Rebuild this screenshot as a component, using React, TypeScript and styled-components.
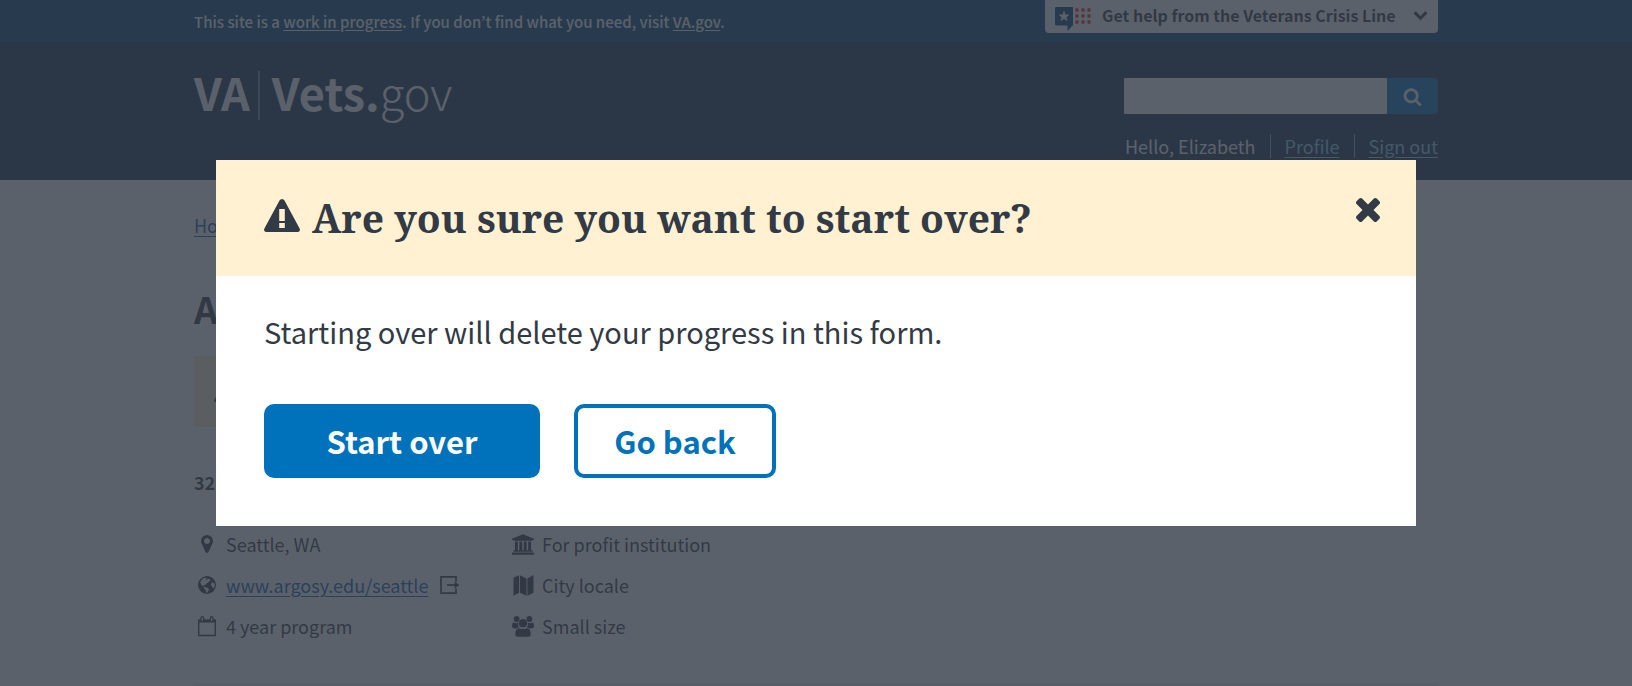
import React from "react";
import styled, { createGlobalStyle } from "styled-components";

const sans = '"Noto Sans CJK JP", "Noto Sans", sans-serif';
const serif = '"Noto Serif", "DejaVu Serif", serif';
const ink = "#323a45";
const blue = "#0071bb";
const cream = "#fff1d2";

const GlobalStyle = createGlobalStyle`
  *, *::before, *::after { box-sizing: border-box; }
  body {
    margin: 0;
    background: #fff;
    color: ${ink};
    font-family: ${sans};
    font-size: 18px;
    line-height: 24px;
    overflow: hidden;
  }
  h1, h2, p, ul { margin: 0; padding: 0; }
  ul { list-style: none; }
  button, input { font-family: inherit; }
  svg { display: block; flex: none; }
`;

const Container = styled.div`
  max-width: 1244px;
  margin: 0 auto;
`;

/* Top banner */

const Banner = styled.div`
  background: #003e73;
  color: #fff;
`;

const BannerRow = styled(Container)`
  display: flex;
  justify-content: space-between;
  align-items: flex-start;
  height: 43px;
`;

const BannerText = styled.p`
  font-size: 15px;
  font-weight: 500;
  line-height: 44px;
`;

const BannerLink = styled.a`
  color: inherit;
  text-underline-offset: 2px;
`;

const CrisisButton = styled.button`
  display: flex;
  align-items: center;
  width: 393px;
  height: 33px;
  padding: 0 10px 4px 10px;
  border: 0;
  border-radius: 0 0 4px 4px;
  background: #fff;
  color: ${ink};
  font-size: 16px;
  font-weight: 700;
  line-height: 24px;
  white-space: nowrap;
`;

const CrisisLabel = styled.span`
  flex: 1;
  padding-left: 10px;
  text-align: left;
`;

/* Site header */

const Header = styled.header`
  background: #112e51;
  color: #fff;
`;

const HeaderRow = styled(Container)`
  display: flex;
  justify-content: space-between;
  align-items: flex-start;
  height: 137px;
`;

const Logo = styled.a`
  display: flex;
  align-items: flex-start;
  margin-top: 28px;
  color: inherit;
  font-size: 45px;
  font-weight: 700;
  line-height: 41px;
  text-decoration: none;
`;

const LogoAgency = styled.span`
  padding-right: 8px;
`;

const LogoSite = styled.span`
  padding: 0 0 8px 12px;
  border-left: 2px solid #6f7f93;
`;

const LogoSuffix = styled.span`
  font-weight: 300;
`;

const HeaderTools = styled.div`
  display: flex;
  flex-direction: column;
  align-items: flex-end;
  gap: 20px;
  padding-top: 35px;
`;

const SearchForm = styled.form`
  display: flex;
  width: 314px;
  height: 36px;
`;

const SearchInput = styled.input`
  flex: 1;
  min-width: 0;
  border: 0;
  padding: 0 10px;
  background: #fff;
  font-size: 18px;
`;

const SearchButton = styled.button`
  display: flex;
  align-items: center;
  justify-content: center;
  width: 51px;
  padding: 0;
  border: 0;
  border-radius: 0 4px 4px 0;
  background: ${blue};
  color: #fff;
`;

const UserNav = styled.nav`
  display: flex;
  white-space: nowrap;
`;

const UserItem = styled.span`
  padding: 0 14px;
  & + & { border-left: 1px solid #9aa6b5; }
  &:last-child { padding-right: 0; }
`;

const UserLink = styled.a`
  color: #8ad0f0;
  text-underline-offset: 3px;
`;

/* Page content */

const Main = styled.main`
  padding-top: 33px;
`;

const TextLink = styled.a`
  color: #0b5ab5;
  text-underline-offset: 3px;
`;

const SchoolName = styled.h1`
  margin-top: 49px;
  font-size: 37px;
  font-weight: 700;
  line-height: 44px;
`;

const AlertBar = styled.div`
  display: flex;
  align-items: center;
  width: 66%;
  height: 71px;
  margin-top: 26px;
  padding-left: 20px;
  background: ${cream};
`;

const StudentCount = styled.p`
  margin-top: 43px;
  font-weight: 700;
`;

const Facts = styled.div`
  display: grid;
  grid-template-columns: 316px 1fr;
  margin-top: 38px;
`;

const FactList = styled.ul`
  display: flex;
  flex-direction: column;
  gap: 17px;
`;

const Fact = styled.li`
  display: flex;
  align-items: center;
  gap: 6px;
`;

const FactIcon = styled.span`
  display: flex;
  justify-content: center;
  width: 26px;
`;

const ExternalIcon = styled.span`
  padding-left: 6px;
`;

const Rule = styled.hr`
  height: 3px;
  margin: 45px 0 0;
  border: 0;
  background: #eeeef0;
`;

/* Modal */

const Overlay = styled.div`
  position: fixed;
  inset: 0;
  padding: 160px 24px 24px;
  background: rgba(50, 58, 69, 0.8);
`;

const Dialog = styled.div`
  max-width: 1200px;
  margin: 0 auto;
  background: #fff;
`;

const DialogHeader = styled.div`
  display: flex;
  align-items: flex-start;
  padding: 36px 34px 36px 48px;
  background: ${cream};
`;

const DialogTitle = styled.h2`
  flex: 1;
  padding-left: 12px;
  font-family: ${serif};
  font-size: 39px;
  font-weight: 700;
  line-height: 44px;
`;

const CloseButton = styled.button`
  padding: 2px;
  border: 0;
  background: none;
  color: ${ink};
`;

const DialogBody = styled.div`
  padding: 35px 48px 48px;
`;

const DialogText = styled.p`
  font-size: 29px;
  line-height: 40px;
`;

const Actions = styled.div`
  display: flex;
  gap: 34px;
  margin-top: 53px;
`;

const ActionButton = styled.button<{ $primary?: boolean }>`
  height: 74px;
  width: ${(p) => (p.$primary ? 276 : 202)}px;
  padding: 0;
  border: 4px solid ${blue};
  border-radius: 10px;
  background: ${(p) => (p.$primary ? blue : "#fff")};
  color: ${(p) => (p.$primary ? "#fff" : blue)};
  font-size: 31px;
  font-weight: 700;
  line-height: 40px;
`;

/* Icons */

const WarningIcon = ({ size }: { size: number }) => (
  <svg width={size} height={size} viewBox="0 0 36 36" fill="currentColor" aria-hidden="true">
    <path
      fillRule="evenodd"
      d="M18 3q1.600 0 2.500 1.500l15.100 28q.7 1.300 0 2.400t-2.100 1.100h-31q-1.400 0-2.100-1.100t0-2.400l15.100-28q.9-1.500 2.500-1.500zM15.200 13v12h5.600v-12zM15.200 27v5h5.600v-5z"
    />
  </svg>
);

const CloseIcon = () => (
  <svg width="24" height="24" viewBox="302 366 1188 1188" fill="currentColor" aria-hidden="true">
    <path d="M1490 1322q0 40-28 68l-136 136q-28 28-68 28t-68-28l-294-294-294 294q-28 28-68 28t-68-28l-136-136q-28-28-28-68t28-68l294-294-294-294q-28-28-28-68t28-68l136-136q28-28 68-28t68 28l294 294 294-294q28-28 68-28t68 28l136 136q28 28 28 68t-28 68l-294 294 294 294q28 28 28 68z" />
  </svg>
);

const SearchIcon = () => (
  <svg width="19" height="19" viewBox="0 0 1792 1792" fill="currentColor" aria-hidden="true">
    <path d="M1216 832q0-185-131.500-316.500t-316.500-131.500-316.500 131.500-131.500 316.500 131.500 316.500 316.500 131.500 316.500-131.500 131.500-316.500zm512 832q0 52-38 90t-90 38q-54 0-90-38l-343-342q-179 124-399 124-143 0-273.500-55.500t-225-150-150-225-55.500-273.500 55.500-273.500 150-225 225-150 273.500-55.500 273.500 55.500 225 150 150 225 55.500 273.500q0 220-124 399l343 343q37 37 37 90z" />
  </svg>
);

const ChevronIcon = () => (
  <svg width="15" height="15" viewBox="0 0 1792 1792" fill="currentColor" aria-hidden="true">
    <path d="M1683 808l-742 741q-19 19-45 19t-45-19l-742-741q-19-19-19-45.500t19-45.500l166-165q19-19 45-19t45 19l531 531 531-531q19-19 45-19t45 19l166 165q19 19 19 45.500t-19 45.500z" />
  </svg>
);

const dots = [2, 8, 14];

const CrisisIcon = () => (
  <svg width="37" height="33" viewBox="0 -9 37 33" aria-hidden="true">
    <path d="M1 0h17v18l-5.500 6v-5.500h-11.500q-1 0-1-1v-16.500q0-1 1-1z" fill="#003e73" />
    <path d="M9 3.500l1.500 4 4.200.1-3.300 2.600 1.200 4.100-3.600-2.400-3.600 2.400 1.200-4.100-3.300-2.600 4.200-.1z" fill="#fff" />
    {dots.map((y) =>
      dots.map((x) => <circle key={`${x}-${y}`} cx={x + 20} cy={y + 1} r="1.900" fill="#f02828" />)
    )}
  </svg>
);

const PinIcon = () => (
  <svg width="12" height="18" viewBox="384 128 1024 1536" fill="currentColor" aria-hidden="true">
    <path d="M1152 640q0-106-75-181t-181-75-181 75-75 181 75 181 181 75 181-75 75-181zm256 0q0 109-33 179l-364 774q-16 33-47.500 52t-67.500 19-67.500-19-46.500-52l-365-774q-33-70-33-179 0-212 150-362t362-150 362 150 150 362z" />
  </svg>
);

const GlobeIcon = () => (
  <svg width="18" height="18" viewBox="0 0 18 18" aria-hidden="true">
    <circle cx="9" cy="9" r="9" fill="currentColor" />
    <path
      d="M3.500 4l2-1.700 2.500-.6 1 .8-1.500 1 1.200.6 1.500-1.300 1.800.5.500 1.200-1.600.8-.6 1.200-1.900 1.100-1.200 1.600-1.600-.3-.2 1.300 1.500.9 2.600.8 1.600 1.400-.8 2-1.500 1.600-.6-.3-.5-2.600-1.700-1.800-.1-1.500-2.200-1.500-1.500-2.600zM13.200 7.500l1.800-1.300 1.700 1.500.2 2-1.300 2.500-1.300-.5-.4-1.700-1.200-.8z"
      fill="#fff"
    />
  </svg>
);

const CalendarIcon = () => (
  <svg width="20" height="21" viewBox="0 0 20 21" fill="none" stroke="currentColor" aria-hidden="true">
    <path d="M1.700 4.500h16.600v15h-16.600z" strokeWidth="1.400" strokeLinejoin="round" />
    <path d="M1 3.500h18v3h-18z" fill="currentColor" stroke="none" />
    <rect x="4" y=".7" width="2.600" height="5" rx="1.300" fill="#fff" strokeWidth="1.300" />
    <rect x="13.400" y=".7" width="2.600" height="5" rx="1.300" fill="#fff" strokeWidth="1.300" />
  </svg>
);

const ExitIcon = () => (
  <svg width="20" height="18" viewBox="0 0 20 18" fill="none" stroke="currentColor" aria-hidden="true">
    <path d="M16 5.500v-4.600h-15v16.200h15v-4.600" strokeWidth="1.700" />
    <path d="M7 9h9" strokeWidth="1.700" />
    <path d="M14.500 5.500l5 3.500-5 3.500z" fill="currentColor" stroke="none" />
  </svg>
);

const InstitutionIcon = () => (
  <svg width="22" height="21" viewBox="0 0 1920 1792" fill="currentColor" aria-hidden="true">
    <path d="M960 0l960 384v128h-128q0 26-20.500 45t-48.500 19h-1526q-28 0-48.500-19t-20.500-45h-128v-128zm-704 640h256v768h128v-768h256v768h128v-768h256v768h128v-768h256v768h59q28 0 48.500 19t20.500 45v64h-1664v-64q0-26 20.500-45t48.500-19h59v-768zm1595 960q28 0 48.500 19t20.500 45v128h-1920v-128q0-26 20.500-45t48.500-19h1782z" />
  </svg>
);

const MapIcon = () => (
  <svg width="21" height="21" viewBox="0 0 21 21" fill="currentColor" aria-hidden="true">
    <path d="M.5 3.200q0-.5.4-.7l5.100-2.300v17.500l-5.100 2.900q-.4.200-.4-.4zM6.900.2l6.600 3.200v17.300l-6.600-3zM14.400 3.400l5.700-3.200q.4-.1.400.5v16.800q0 .4-.4.6l-5.700 2.600z" />
  </svg>
);

const GroupIcon = () => (
  <svg width="22" height="21" viewBox="0 0 22 21" fill="currentColor" aria-hidden="true">
    <circle cx="4.600" cy="3" r="2.900" />
    <circle cx="17.400" cy="3" r="2.900" />
    <circle cx="11" cy="7.200" r="4.300" />
    <path d="M1.800 6.500q2.500 1.300 4.200.1-.5 3 1.200 4.900-1.500.1-2.600 1h-2q-2.600-.1-2.600-2.500 0-3.200 1.800-3.500zM20.200 6.500q-2.500 1.300-4.200.1.500 3-1.200 4.900 1.500.1 2.600 1h2q2.600-.1 2.600-2.500 0-3.200-1.800-3.500z" />
    <path d="M7.200 12.200q3.800 1.800 7.600 0 4 .3 4 6 0 2.500-2.700 2.500h-10.200q-2.700 0-2.700-2.500 0-5.700 4-6z" />
  </svg>
);

export default function App() {
  return (
    <>
      <GlobalStyle />
      <Banner>
        <BannerRow>
          <BannerText>
            This site is a <BannerLink href="#progress">work in progress</BannerLink>. If you don’t find
            what you need, visit <BannerLink href="#va">VA.gov</BannerLink>.
          </BannerText>
          <CrisisButton type="button">
            <CrisisIcon />
            <CrisisLabel>Get help from the Veterans Crisis Line</CrisisLabel>
            <ChevronIcon />
          </CrisisButton>
        </BannerRow>
      </Banner>
      <Header>
        <HeaderRow>
          <Logo href="#home">
            <LogoAgency>VA</LogoAgency>
            <LogoSite>
              Vets.<LogoSuffix>gov</LogoSuffix>
            </LogoSite>
          </Logo>
          <HeaderTools>
            <SearchForm role="search">
              <SearchInput type="search" aria-label="Search" />
              <SearchButton type="submit" aria-label="Search">
                <SearchIcon />
              </SearchButton>
            </SearchForm>
            <UserNav>
              <UserItem>Hello, Elizabeth</UserItem>
              <UserItem>
                <UserLink href="#profile">Profile</UserLink>
              </UserItem>
              <UserItem>
                <UserLink href="#signout">Sign out</UserLink>
              </UserItem>
            </UserNav>
          </HeaderTools>
        </HeaderRow>
      </Header>
      <Main>
        <Container>
          <TextLink href="#home">Home</TextLink>
          <SchoolName>Argosy</SchoolName>
          <AlertBar>
            <WarningIcon size={20} />
          </AlertBar>
          <StudentCount>32</StudentCount>
          <Facts>
            <FactList>
              <Fact>
                <FactIcon><PinIcon /></FactIcon>
                Seattle, WA
              </Fact>
              <Fact>
                <FactIcon><GlobeIcon /></FactIcon>
                <TextLink href="#school">www.argosy.edu/seattle</TextLink>
                <ExternalIcon><ExitIcon /></ExternalIcon>
              </Fact>
              <Fact>
                <FactIcon><CalendarIcon /></FactIcon>
                4 year program
              </Fact>
            </FactList>
            <FactList>
              <Fact>
                <FactIcon><InstitutionIcon /></FactIcon>
                For profit institution
              </Fact>
              <Fact>
                <FactIcon><MapIcon /></FactIcon>
                City locale
              </Fact>
              <Fact>
                <FactIcon><GroupIcon /></FactIcon>
                Small size
              </Fact>
            </FactList>
          </Facts>
          <Rule />
        </Container>
      </Main>
      <Overlay>
        <Dialog role="dialog" aria-modal="true" aria-labelledby="dialog-title">
          <DialogHeader>
            <WarningIcon size={36} />
            <DialogTitle id="dialog-title">Are you sure you want to start over?</DialogTitle>
            <CloseButton type="button" aria-label="Close">
              <CloseIcon />
            </CloseButton>
          </DialogHeader>
          <DialogBody>
            <DialogText>Starting over will delete your progress in this form.</DialogText>
            <Actions>
              <ActionButton type="button" $primary>Start over</ActionButton>
              <ActionButton type="button">Go back</ActionButton>
            </Actions>
          </DialogBody>
        </Dialog>
      </Overlay>
    </>
  );
}
